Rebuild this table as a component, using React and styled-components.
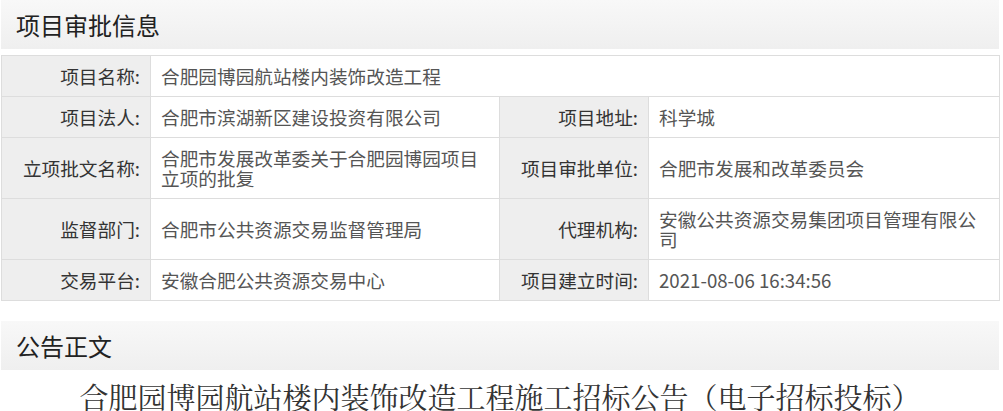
import styled, { createGlobalStyle } from "styled-components";

const GlobalStyle = createGlobalStyle`
  body {
    margin: 0;
    background: #fff;
    font-family: "Noto Sans CJK SC", "Liberation Sans", sans-serif;
  }
`;

const Page = styled.div`
  width: 998px;
  margin-left: 1px;
`;

const SectionHead = styled.div`
  height: 49px;
  display: flex;
  align-items: center;
  padding-left: 15px;
  margin-top: ${(props) => props.top || 0}px;
  background: linear-gradient(to bottom, #f8f8f8, #efefef);
  color: #222;
  font-size: 24px;
`;

const InfoTable = styled.table`
  width: 998px;
  margin-top: 6px;
  border-collapse: collapse;
  table-layout: fixed;
  font-size: 18.67px;
  line-height: 20px;
`;

const Col = styled.col`
  width: ${(props) => props.w}px;
`;

const Label = styled.th`
  background: #eee;
  border: 1px solid #ddd;
  color: #333;
  font-weight: normal;
  text-align: right;
  padding: 10px 10px 10px 4px;
  white-space: nowrap;
`;

const Value = styled.td`
  border: 1px solid #ddd;
  color: #555;
  text-align: left;
  padding: 10px 16px 10px 10px;
`;

const Title = styled.div`
  padding-top: 10px;
  text-align: center;
  font-family: "Liberation Serif", "Noto Serif CJK SC", "Noto Sans CJK SC", serif;
  font-size: 29px;
  line-height: 38px;
  color: #333;
`;

const rows = [
  [["项目名称:", "合肥园博园航站楼内装饰改造工程"]],
  [
    ["项目法人:", "合肥市滨湖新区建设投资有限公司"],
    ["项目地址:", "科学城"],
  ],
  [
    ["立项批文名称:", "合肥市发展改革委关于合肥园博园项目立项的批复"],
    ["项目审批单位:", "合肥市发展和改革委员会"],
  ],
  [
    ["监督部门:", "合肥市公共资源交易监督管理局"],
    ["代理机构:", "安徽公共资源交易集团项目管理有限公司"],
  ],
  [
    ["交易平台:", "安徽合肥公共资源交易中心"],
    ["项目建立时间:", "2021-08-06 16:34:56"],
  ],
];

const App = () => {
  return (
    <Page>
      <GlobalStyle />
      <SectionHead>项目审批信息</SectionHead>
      <InfoTable>
        <colgroup>
          <Col w={149} />
          <Col w={349} />
          <Col w={149} />
          <Col w={351} />
        </colgroup>
        <tbody>
          {rows.map((row, i) => (
            <tr key={i}>
              {row.map(([label, value]) => [
                <Label key={label}>{label}</Label>,
                <Value key={label + "v"} colSpan={row.length === 1 ? 3 : 1}>
                  {value}
                </Value>,
              ])}
            </tr>
          ))}
        </tbody>
      </InfoTable>
      <SectionHead top={20}>公告正文</SectionHead>
      <Title>合肥园博园航站楼内装饰改造工程施工招标公告（电子招标投标）</Title>
    </Page>
  );
};

export default App;
